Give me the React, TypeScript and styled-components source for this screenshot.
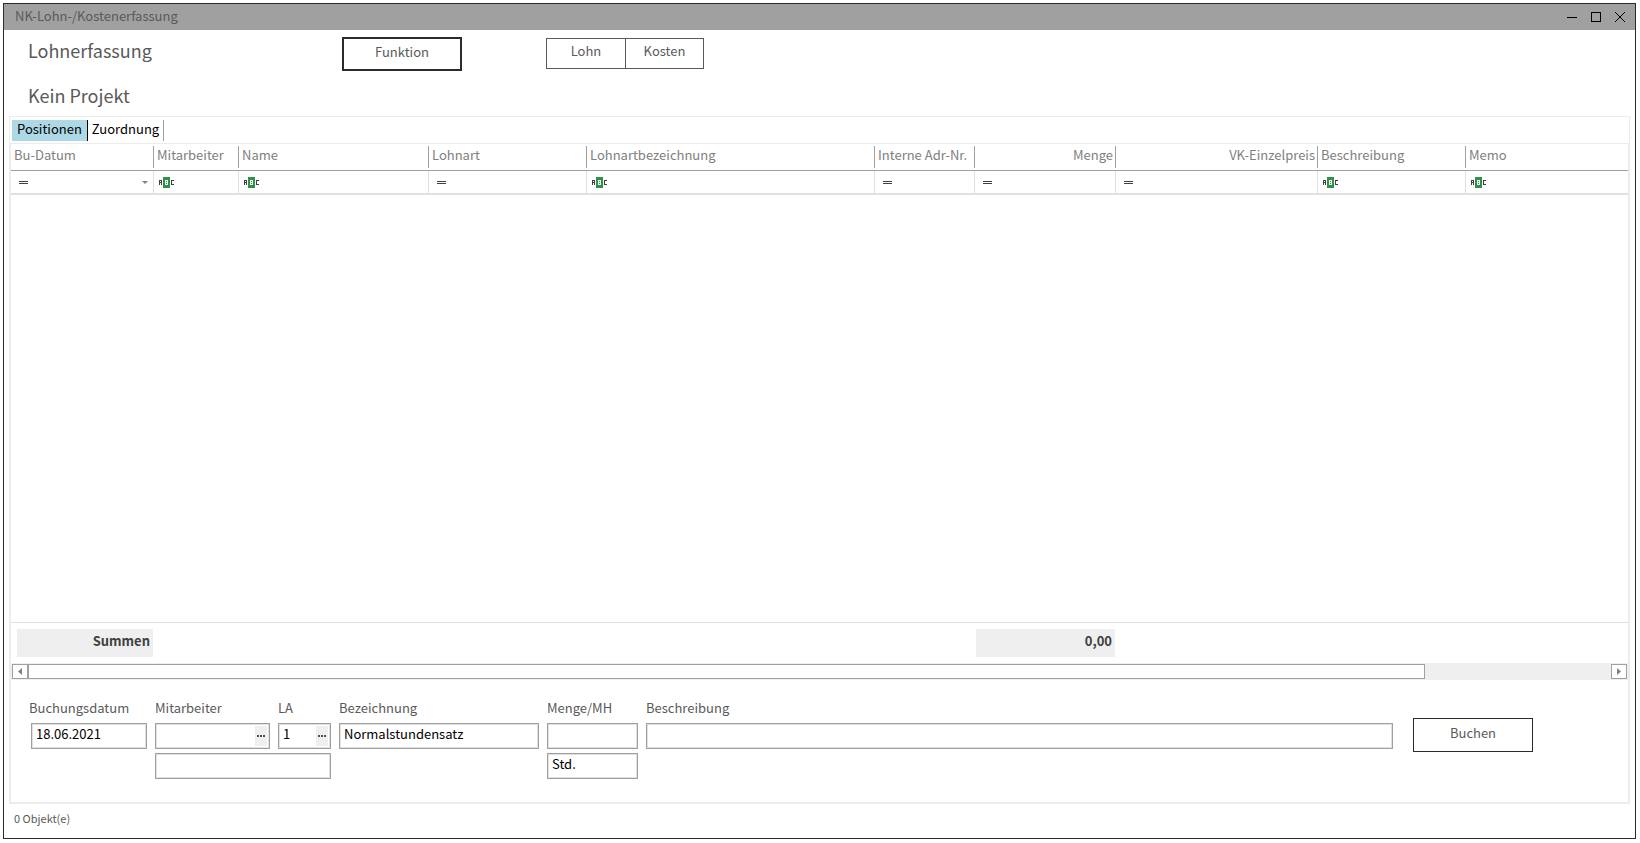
import React from "react";
import styled, { createGlobalStyle, css } from "styled-components";

const GlobalStyle = createGlobalStyle`
  *, *::before, *::after { box-sizing: border-box; }
  body { margin: 0; background: #ffffff; }
  body, button, input { font-family: "Noto Sans CJK SC", "Noto Sans", sans-serif; font-size: 13px; line-height: 20px; }
  button { cursor: default; }
  svg { display: block; flex: none; }
`;

const Window = styled.div`
  display: flex;
  flex-direction: column;
  min-height: calc(100vh - 7px);
  margin: 3px 4px 4px 3px;
  border: 1px solid #2b2b2b;
  color: #5a5a5a;
`;

const TitleBar = styled.header`
  display: flex;
  align-items: center;
  justify-content: space-between;
  height: 26px;
  padding: 0 3px 2px 11px;
  background: #a0a0a0;
`;

const WindowTitle = styled.span`
  white-space: nowrap;
`;

const WindowControls = styled.div`
  display: flex;
`;

const ControlButton = styled.button`
  display: flex;
  align-items: center;
  justify-content: center;
  width: 24px;
  height: 24px;
  padding: 2px 0 0;
  border: 0;
  background: transparent;
`;

const Head = styled.section`
  display: flex;
  height: 86px;
  padding: 7px 0 0 24px;
`;

const Headings = styled.div`
  width: 314px;
`;

const Heading = styled.h1`
  margin: 0 0 19px;
  font-size: 18px;
  line-height: 26px;
  font-weight: 400;
`;

const ActionButton = styled.button<{ $strong?: boolean }>`
  flex: none;
  width: 120px;
  height: 34px;
  padding: 0 0 5px;
  border: ${(p) => (p.$strong ? 2 : 1)}px solid #2b2b2b;
  background: #ffffff;
  color: #5a5a5a;
`;

const BookButton = styled(ActionButton)`
  margin: 21px 0 0 20px;
`;

const Segments = styled.div`
  display: flex;
  height: 31px;
  margin: 1px 0 0 84px;
  border: 1px solid #5a5a5a;
`;

const Segment = styled.button`
  width: 78px;
  padding: 0 0 6px;
  border: 0;
  background: #ffffff;
  color: #5a5a5a;

  & + & { border-left: 1px solid #5a5a5a; }
`;

const Panel = styled.main`
  display: flex;
  flex: 1;
  flex-direction: column;
  margin: 0 5px;
  border: 1px solid #ececec;
`;

const Tabs = styled.div`
  display: flex;
  height: 26px;
  padding: 3px 2px 2px;
`;

const Tab = styled.button<{ $active?: boolean }>`
  padding: 0 4px 3px;
  border: 0;
  border-right: 1px solid #a0a0a0;
  background: #ffffff;
  color: #000000;
  line-height: 16px;
  ${(p) => p.$active && css`
    padding: 0 5px 3px;
    border-color: #000000;
    background: #add8e6;
  `}
`;

const Sheet = styled.div`
  display: flex;
  flex: 1;
  flex-direction: column;
  border: 1px solid #ececec;
`;

const GridArea = styled.div`
  flex: 1;
  min-height: 200px;
  border-bottom: 1px solid #e0e0e0;
`;

const GridTable = styled.table`
  width: 100%;
  border-collapse: separate;
  border-spacing: 0;
  table-layout: fixed;
`;

const ColumnHead = styled.th<{ $end?: boolean }>`
  height: 27px;
  padding: 0 3px 4px;
  border-bottom: 1px solid #a0a0a0;
  background: linear-gradient(#a0a0a0, #a0a0a0) no-repeat right top 2px / 1px 22px;
  color: #808080;
  font-weight: 400;
  text-align: ${(p) => (p.$end ? "right" : "left")};
  white-space: nowrap;

  &:last-child { background: none; }
`;

const FilterCell = styled.td`
  height: 24px;
  padding: 5px 5px 0;
  border-right: 1px solid #e0e0e0;
  border-bottom: 2px solid #e0e0e0;
  vertical-align: top;

  &:last-child { border-right: 0; }
`;

const FilterContent = styled.div`
  display: flex;
  align-items: center;
  justify-content: space-between;
`;

const FilterButton = styled.button`
  display: flex;
  padding: 0;
  border: 0;
  background: transparent;
`;

const Totals = styled.div`
  display: flex;
  height: 40px;
  padding: 6px 6px;
`;

const Total = styled.output<{ $width: number; $gap?: number }>`
  flex: none;
  width: ${(p) => p.$width}px;
  height: 28px;
  margin-left: ${(p) => p.$gap ?? 0}px;
  padding: 2px 3px;
  background: #efefef;
  color: #404040;
  font-weight: 700;
  text-align: right;
`;

const ScrollTrack = styled.div`
  display: flex;
  height: 17px;
  padding: 1px;
  background: #efefef;
`;

const ScrollButton = styled.button`
  display: flex;
  align-items: center;
  justify-content: center;
  flex: none;
  width: 16px;
  padding: 0;
  border: 1px solid #a0a0a0;
  background: #ffffff;
`;

const ScrollRail = styled.div`
  flex: 1;
`;

const ScrollThumb = styled.div`
  width: 88.25%;
  height: 15px;
  border: 1px solid #a0a0a0;
  background: #ffffff;
`;

const EntryForm = styled.form`
  display: flex;
  height: 122px;
  padding: 17px 95px 0 18px;
`;

const Fields = styled.div`
  display: grid;
  flex: 1;
  grid-template-columns: 118px 115px 53px 200px 91px 1fr;
  grid-template-rows: 22px 26px 26px;
  column-gap: 8px;
  row-gap: 4px;
  align-content: start;
`;

const FieldLabel = styled.label`
  padding-top: 1px;
  white-space: nowrap;
`;

const FieldBox = styled.div<{ $column?: string; $inset?: boolean }>`
  display: flex;
  grid-column: ${(p) => p.$column ?? "auto"};
  margin-left: ${(p) => (p.$inset ? 2 : 0)}px;
  padding: 1px;
  border: 1px solid #a0a0a0;
  box-shadow: inset 0 0 0 1px #e0e0e0;
`;

const TextInput = styled.input`
  flex: 1;
  width: 0;
  min-width: 0;
  padding: 0 3px 4px;
  border: 0;
  outline: 0;
  background: transparent;
  color: #000000;
`;

const LookupButton = styled.button`
  display: flex;
  align-items: center;
  justify-content: center;
  width: 12px;
  margin: 1px;
  padding: 0;
  border: 0;
  background: #efefef;
`;

const StatusBar = styled.footer`
  height: 34px;
  padding: 4px 10px;
  font-size: 11px;
`;

const MinimizeIcon = () => (
  <svg width="10" height="10" viewBox="0 0 10 10" shapeRendering="crispEdges"><path d="M0 5h10v1H0z" /></svg>
);
const MaximizeIcon = () => (
  <svg width="10" height="10" viewBox="0 0 10 10" shapeRendering="crispEdges"><path d="M.5.5h9v9h-9z" fill="none" stroke="#000" /></svg>
);
const CloseIcon = () => (
  <svg width="10" height="10" viewBox="0 0 10 10" shapeRendering="crispEdges"><path d="M0 0l10 10M10 0L0 10" stroke="#000" /></svg>
);
const EqualsIcon = () => (
  <svg width="15" height="12" viewBox="0 0 15 12">
    <rect x="3" y="5" width="9" height="1" fill="#404040" />
    <rect x="3" y="7" width="9" height="1" fill="#404040" />
  </svg>
);
const ContainsIcon = () => (
  <svg width="15" height="12" viewBox="0 0 15 12">
    <path d="M4 1h7v11H4z" fill="#2f9048" />
    <path d="M0 4h3v5H2V7H1v2H0zM1 5v1h1V5zM12 4h3v1h-2v3h2v1h-3z" fill="#404040" fillRule="evenodd" />
    <path d="M6 4h3v5H6zM7 5v1h1V5zM7 7v1h1V7z" fill="#fff" fillRule="evenodd" />
  </svg>
);
const DownIcon = () => (
  <svg width="6" height="4" viewBox="0 0 6 4"><path d="M0 1h6L3 4z" fill="#808080" /></svg>
);
const ArrowIcon = ({ right }: { right?: boolean }) => (
  <svg width="4" height="7" viewBox="0 0 4 7"><path d={right ? "M0 0v7l4-3.5z" : "M4 0v7L0 3.5z"} fill="#808080" /></svg>
);
const DotsIcon = () => (
  <svg width="8" height="2" viewBox="0 0 8 2"><path d="M0 0h2v2H0zM3 0h2v2H3zM6 0h2v2H6z" fill="#505050" /></svg>
);

type Column = { name: string; width?: number; end?: boolean; numeric?: boolean; menu?: boolean };

const columns: Column[] = [
  { name: "Bu-Datum", width: 143, numeric: true, menu: true },
  { name: "Mitarbeiter", width: 85 },
  { name: "Name", width: 190 },
  { name: "Lohnart", width: 158, numeric: true },
  { name: "Lohnartbezeichnung", width: 288 },
  { name: "Interne Adr-Nr.", width: 100, numeric: true },
  { name: "Menge", width: 141, end: true, numeric: true },
  { name: "VK-Einzelpreis", width: 202, end: true, numeric: true },
  { name: "Beschreibung", width: 148 },
  { name: "Memo" },
];

export default function App() {
  return (
    <>
      <GlobalStyle />
      <Window>
        <TitleBar>
          <WindowTitle>NK-Lohn-/Kostenerfassung</WindowTitle>
          <WindowControls>
            <ControlButton aria-label="Minimieren"><MinimizeIcon /></ControlButton>
            <ControlButton aria-label="Maximieren"><MaximizeIcon /></ControlButton>
            <ControlButton aria-label="Schließen"><CloseIcon /></ControlButton>
          </WindowControls>
        </TitleBar>

        <Head>
          <Headings>
            <Heading>Lohnerfassung</Heading>
            <Heading as="h2">Kein Projekt</Heading>
          </Headings>
          <ActionButton $strong>Funktion</ActionButton>
          <Segments>
            <Segment>Lohn</Segment>
            <Segment>Kosten</Segment>
          </Segments>
        </Head>

        <Panel>
          <Tabs role="tablist">
            <Tab role="tab" aria-selected $active>Positionen</Tab>
            <Tab role="tab">Zuordnung</Tab>
          </Tabs>

          <Sheet>
            <GridArea>
              <GridTable>
                <colgroup>
                  {columns.map((c) => <col key={c.name} width={c.width} />)}
                </colgroup>
                <thead>
                  <tr>
                    {columns.map((c) => <ColumnHead key={c.name} scope="col" $end={c.end}>{c.name}</ColumnHead>)}
                  </tr>
                </thead>
                <tbody>
                  <tr>
                    {columns.map((c) => (
                      <FilterCell key={c.name}>
                        <FilterContent>
                          <FilterButton aria-label={`Filter ${c.name}`}>
                            {c.numeric ? <EqualsIcon /> : <ContainsIcon />}
                          </FilterButton>
                          {c.menu && <FilterButton aria-label="Datum wählen"><DownIcon /></FilterButton>}
                        </FilterContent>
                      </FilterCell>
                    ))}
                  </tr>
                </tbody>
              </GridTable>
            </GridArea>

            <Totals>
              <Total $width={136}>Summen</Total>
              <Total $width={139} $gap={823}>0,00</Total>
            </Totals>

            <ScrollTrack>
              <ScrollButton aria-label="Nach links"><ArrowIcon /></ScrollButton>
              <ScrollRail><ScrollThumb /></ScrollRail>
              <ScrollButton aria-label="Nach rechts"><ArrowIcon right /></ScrollButton>
            </ScrollTrack>

            <EntryForm onSubmit={(e) => e.preventDefault()}>
              <Fields>
                <FieldLabel htmlFor="datum">Buchungsdatum</FieldLabel>
                <FieldLabel htmlFor="mitarbeiter">Mitarbeiter</FieldLabel>
                <FieldLabel htmlFor="la">LA</FieldLabel>
                <FieldLabel htmlFor="bezeichnung">Bezeichnung</FieldLabel>
                <FieldLabel htmlFor="menge">Menge/MH</FieldLabel>
                <FieldLabel htmlFor="beschreibung">Beschreibung</FieldLabel>

                <FieldBox $inset><TextInput id="datum" defaultValue="18.06.2021" /></FieldBox>
                <FieldBox>
                  <TextInput id="mitarbeiter" />
                  <LookupButton type="button" aria-label="Mitarbeiter suchen"><DotsIcon /></LookupButton>
                </FieldBox>
                <FieldBox>
                  <TextInput id="la" defaultValue="1" />
                  <LookupButton type="button" aria-label="Lohnart suchen"><DotsIcon /></LookupButton>
                </FieldBox>
                <FieldBox><TextInput id="bezeichnung" defaultValue="Normalstundensatz" /></FieldBox>
                <FieldBox><TextInput id="menge" /></FieldBox>
                <FieldBox><TextInput id="beschreibung" /></FieldBox>

                <FieldBox $column="2 / 4"><TextInput aria-label="Name des Mitarbeiters" /></FieldBox>
                <FieldBox $column="5"><TextInput aria-label="Einheit" defaultValue="Std." /></FieldBox>
              </Fields>
              <BookButton>Buchen</BookButton>
            </EntryForm>
          </Sheet>
        </Panel>

        <StatusBar>0 Objekt(e)</StatusBar>
      </Window>
    </>
  );
}
